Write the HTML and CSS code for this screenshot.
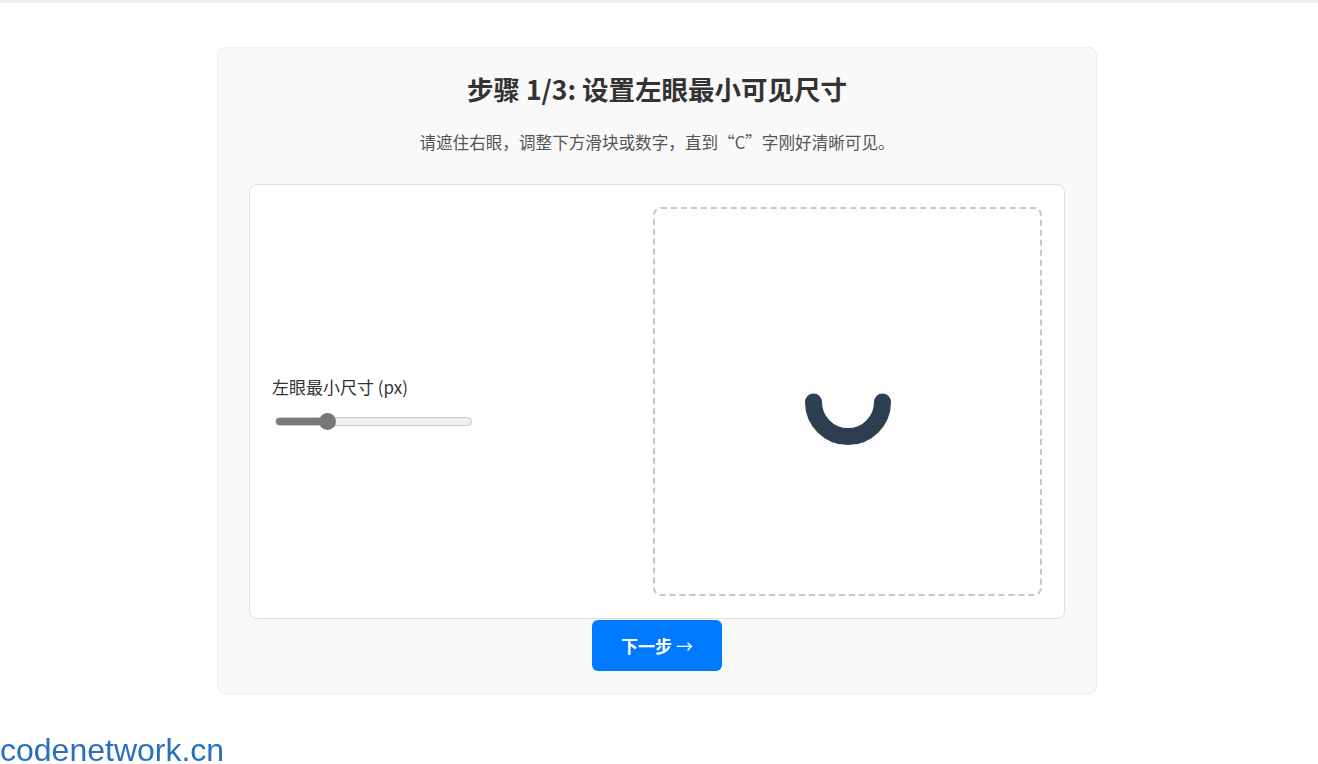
FILE: index.html
```html
<!DOCTYPE html>
<html lang="zh-CN">
<head>
<meta charset="utf-8">
<title>视力测试</title>
<link rel="stylesheet" href="styles.css">
</head>
<body>
<div class="topbar"></div>
<main class="card">
  <h2 class="title">步骤 1/3: 设置左眼最小可见尺寸</h2>
  <p class="subtitle">请遮住右眼，调整下方滑块或数字，直到“C”字刚好清晰可见。</p>
  <section class="panel">
    <div class="controls">
      <label class="label" for="size">左眼最小尺寸 (px)</label>
      <input class="slider" id="size" type="range" min="0" max="100" value="24">
    </div>
    <div class="preview">
      <svg class="landolt" width="104" height="104" viewBox="0 0 104 104" aria-hidden="true">
        <path d="M17.5 52 A34.5 34.5 0 0 0 86.5 52" fill="none" stroke="#2c3e50" stroke-width="17" stroke-linecap="round"/>
      </svg>
    </div>
  </section>
  <div class="actions">
    <button class="next" type="button">下一步 <span class="arrow">→</span></button>
  </div>
</main>
<div class="watermark">codenetwork.cn</div>
</body>
</html>
```

FILE: styles.css
```css
html, body {
  margin: 0;
  padding: 0;
  background: #ffffff;
}

body {
  padding-right: 4px;
  font-family: "Noto Sans CJK SC", "Noto Sans", sans-serif;
  color: #333;
}

.topbar {
  height: 3px;
  margin-right: -4px;
  background: #f0f0f0;
}

.card {
  width: 816px;
  margin: 44px auto 0;
  padding: 25px 31px 22px;
  background: #f9f9f9;
  border: 1px solid #eeeeee;
  border-radius: 8px;
  box-sizing: content-box;
}

.title {
  margin: 0 0 26px;
  font-size: 26.5px;
  line-height: 31px;
  font-weight: 700;
  text-align: center;
  color: #333;
}

.subtitle {
  margin: 0 0 30px;
  font-size: 16.6px;
  line-height: 24px;
  text-align: center;
  color: #555;
}

.panel {
  display: flex;
  align-items: center;
  justify-content: space-between;
  padding: 22px;
  background: #ffffff;
  border: 1px solid #e0e0e0;
  border-radius: 8px;
}

.controls {
  display: flex;
  flex-direction: column;
  align-items: flex-start;
  gap: 17px;
  margin-top: -4px;
}

.label {
  font-size: 17px;
  line-height: 26px;
  font-weight: 400;
  color: #333;
}

.slider {
  -webkit-appearance: none;
  appearance: none;
  width: 197px;
  height: 9px;
  margin: 0 0 0 3px;
  border: 1px solid #c8c8c8;
  border-radius: 5px;
  background: linear-gradient(to right, #7a7a7a 0, #7a7a7a 27%, #efefef 27%, #efefef 100%);
  outline: none;
  box-sizing: border-box;
}

.slider::-webkit-slider-thumb {
  -webkit-appearance: none;
  appearance: none;
  width: 17px;
  height: 17px;
  border-radius: 50%;
  background: #777777;
  border: none;
}

.preview {
  width: 385px;
  height: 385px;
  display: flex;
  align-items: center;
  justify-content: center;
  border: 2px dashed #c8c8c8;
  border-radius: 8px;
  background: #fdfdfd;
}

.landolt {
  display: block;
}

.actions {
  display: flex;
  justify-content: center;
  margin-top: 1px;
}

.next {
  height: 51px;
  padding: 0 29px;
  font-family: "Noto Sans CJK SC", "Noto Sans", sans-serif;
  font-size: 17px;
  line-height: 23px;
  font-weight: 700;
  color: #ffffff;
  background: #007bff;
  border: none;
  border-radius: 6px;
  cursor: pointer;
}

.arrow {
  font-weight: 400;
}

.watermark {
  position: fixed;
  left: 0;
  bottom: 0;
  font-family: "Liberation Sans", Arial, sans-serif;
  font-size: 32px;
  line-height: 27px;
  color: #2a6fbf;
}
```
